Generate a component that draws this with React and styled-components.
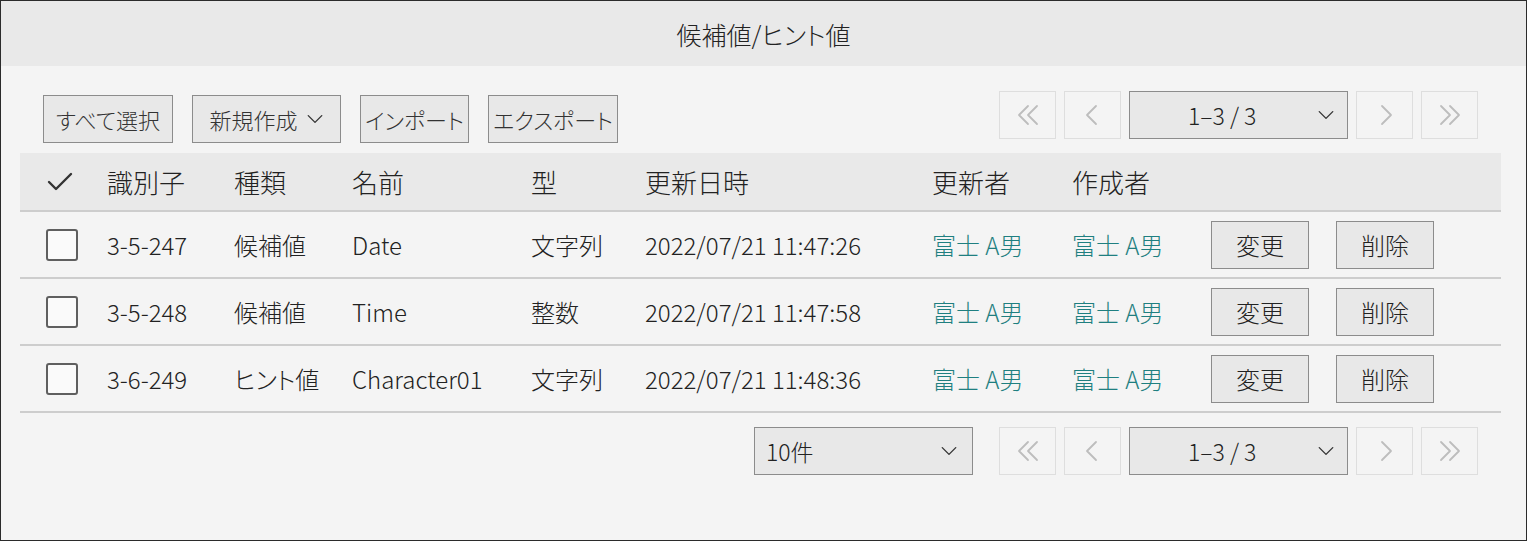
import React from "react"
import styled, { createGlobalStyle } from "styled-components"

const rows = [
  { id: "3-5-247", kind: "候補値", name: "Date", type: "文字列", updated: "2022/07/21 11:47:26" },
  { id: "3-5-248", kind: "候補値", name: "Time", type: "整数", updated: "2022/07/21 11:47:58" },
  { id: "3-6-249", kind: "ヒント値", name: "Character01", type: "文字列", updated: "2022/07/21 11:48:36" },
]

const columns = "87px 127px 118px 179px 114px 287px 140px 139px 125px 1fr"

const Chevron = ({ dir = "down", size = 16, color = "#333" }) => {
  const paths = {
    down: "M2 5 L8 11 L14 5",
    left: "M10 2 L4 8 L10 14",
    right: "M6 2 L12 8 L6 14",
    first: "M8 2 L2 8 L8 14 M14 2 L8 8 L14 14",
    last: "M2 2 L8 8 L2 14 M8 2 L14 8 L8 14",
  }
  return (
    <svg width={size} height={size} viewBox="0 0 16 16" fill="none">
      <path d={paths[dir]} stroke={color} strokeWidth="1.2" strokeLinecap="round" strokeLinejoin="round" />
    </svg>
  )
}

const Pager = () => (
  <PagerGroup>
    <ArrowButton><Chevron dir="first" size={24} color="#bdbdbd" /></ArrowButton>
    <ArrowButton><Chevron dir="left" size={24} color="#bdbdbd" /></ArrowButton>
    <SelectBox width={219} center>
      <span>1–3 / 3</span>
      <Chevron dir="down" size={18} />
    </SelectBox>
    <ArrowButton><Chevron dir="right" size={24} color="#bdbdbd" /></ArrowButton>
    <ArrowButton><Chevron dir="last" size={24} color="#bdbdbd" /></ArrowButton>
  </PagerGroup>
)

const App = () => {
  return (
    <Frame>
      <GlobalStyle />
      <TitleBar>候補値/ヒント値</TitleBar>

      <Content>
        <Toolbar>
          <ActionGroup>
            <ToolButton width={130}>すべて選択</ToolButton>
            <ToolButton width={149}>
              新規作成
              <Chevron dir="down" size={18} />
            </ToolButton>
            <ToolButton width={109}>インポート</ToolButton>
            <ToolButton width={130}>エクスポート</ToolButton>
          </ActionGroup>
          <Pager />
        </Toolbar>

        <Table>
          <HeaderRow>
            <CheckCell>
              <svg width="28" height="22" viewBox="0 0 28 22" fill="none">
                <path d="M3 11 L10 18 L25 3" stroke="#333" strokeWidth="2.4" strokeLinecap="round" strokeLinejoin="round" />
              </svg>
            </CheckCell>
            <HeadCell>識別子</HeadCell>
            <HeadCell>種類</HeadCell>
            <HeadCell>名前</HeadCell>
            <HeadCell>型</HeadCell>
            <HeadCell>更新日時</HeadCell>
            <HeadCell>更新者</HeadCell>
            <HeadCell>作成者</HeadCell>
            <HeadCell />
            <HeadCell />
          </HeaderRow>

          {rows.map(row => (
            <Row key={row.id}>
              <CheckCell>
                <CheckBox />
              </CheckCell>
              <Cell>{row.id}</Cell>
              <Cell>{row.kind}</Cell>
              <Cell>{row.name}</Cell>
              <Cell>{row.type}</Cell>
              <Cell>{row.updated}</Cell>
              <Cell user>富士 A男</Cell>
              <Cell user>富士 A男</Cell>
              <Cell>
                <RowButton>変更</RowButton>
              </Cell>
              <Cell>
                <RowButton>削除</RowButton>
              </Cell>
            </Row>
          ))}
        </Table>

        <Footer>
          <SelectBox width={219}>
            <span>10件</span>
            <Chevron dir="down" size={18} />
          </SelectBox>
          <Pager />
        </Footer>
      </Content>
    </Frame>
  )
}

// Styled Components
const GlobalStyle = createGlobalStyle`
  *, *::before, *::after {
    margin: 0;
    padding: 0;
    box-sizing: border-box;
  }
  body {
    background: #f4f4f4;
    font-family: "Noto Sans CJK JP", "Noto Sans", sans-serif;
    font-weight: 300;
    font-feature-settings: "palt";
    color: #222;
  }
  button {
    font-weight: 300;
    font-feature-settings: "palt";
  }
`

const Frame = styled.div`
  width: 1527px;
  height: 541px;
  border: 1px solid #2b2b2b;
  background: #f4f4f4;
  display: flex;
  flex-direction: column;
`

const TitleBar = styled.header`
  height: 65px;
  background: #e9e9e9;
  display: flex;
  align-items: center;
  justify-content: center;
  font-size: 25px;
  color: #222;
`

const Content = styled.main`
  padding: 25px 25px 0 19px;
  display: flex;
  flex-direction: column;
`

const Toolbar = styled.div`
  display: flex;
  justify-content: space-between;
  align-items: flex-start;
  padding: 0 23px 0 23px;
  height: 62px;
`

const ActionGroup = styled.div`
  display: flex;
  gap: 19px;
  margin-top: 4px;
`

const ToolButton = styled.button`
  width: ${({ width }) => width}px;
  height: 48px;
  display: flex;
  align-items: center;
  justify-content: center;
  gap: 8px;
  background: #e8e8e8;
  border: 1px solid #8c8c8c;
  font-family: inherit;
  font-size: 22px;
  color: #333;
  white-space: nowrap;
`

const PagerGroup = styled.div`
  display: flex;
  gap: 8px;
`

const ArrowButton = styled.button`
  width: 57px;
  height: 48px;
  display: flex;
  align-items: center;
  justify-content: center;
  background: transparent;
  border: 1px solid #dedede;
`

const SelectBox = styled.div`
  width: ${({ width }) => width}px;
  height: 48px;
  display: flex;
  align-items: center;
  justify-content: space-between;
  padding: ${({ center }) => (center ? "0 12px 0 58px" : "0 14px 0 11px")};
  background: #e8e8e8;
  border: 1px solid #8c8c8c;
  font-size: 23px;
  color: #222;
`

const Table = styled.div`
  display: flex;
  flex-direction: column;
`

const HeaderRow = styled.div`
  display: grid;
  grid-template-columns: ${columns};
  height: 59px;
  background: #e9e9e9;
  border-bottom: 2px solid #cdcdcd;
  align-items: center;
`

const Row = styled.div`
  display: grid;
  grid-template-columns: ${columns};
  height: 67px;
  border-bottom: 2px solid #cdcdcd;
  align-items: center;
`

const CheckCell = styled.div`
  padding-left: 26px;
  display: flex;
  align-items: center;
`

const HeadCell = styled.div`
  font-size: 26px;
  color: #222;
`

const Cell = styled.div`
  font-size: 24px;
  color: ${({ user }) => (user ? "#1f7f80" : "#222")};
`

const CheckBox = styled.span`
  display: block;
  width: 32px;
  height: 32px;
  border: 2px solid #5f5f5f;
  border-radius: 3px;
  background: #fafafa;
`

const RowButton = styled.button`
  width: 98px;
  height: 48px;
  background: #e8e8e8;
  border: 1px solid #8c8c8c;
  font-family: inherit;
  font-size: 24px;
  color: #222;
`

const Footer = styled.div`
  display: flex;
  justify-content: flex-end;
  gap: 26px;
  margin-top: 14px;
  padding-right: 23px;
`

export default App
